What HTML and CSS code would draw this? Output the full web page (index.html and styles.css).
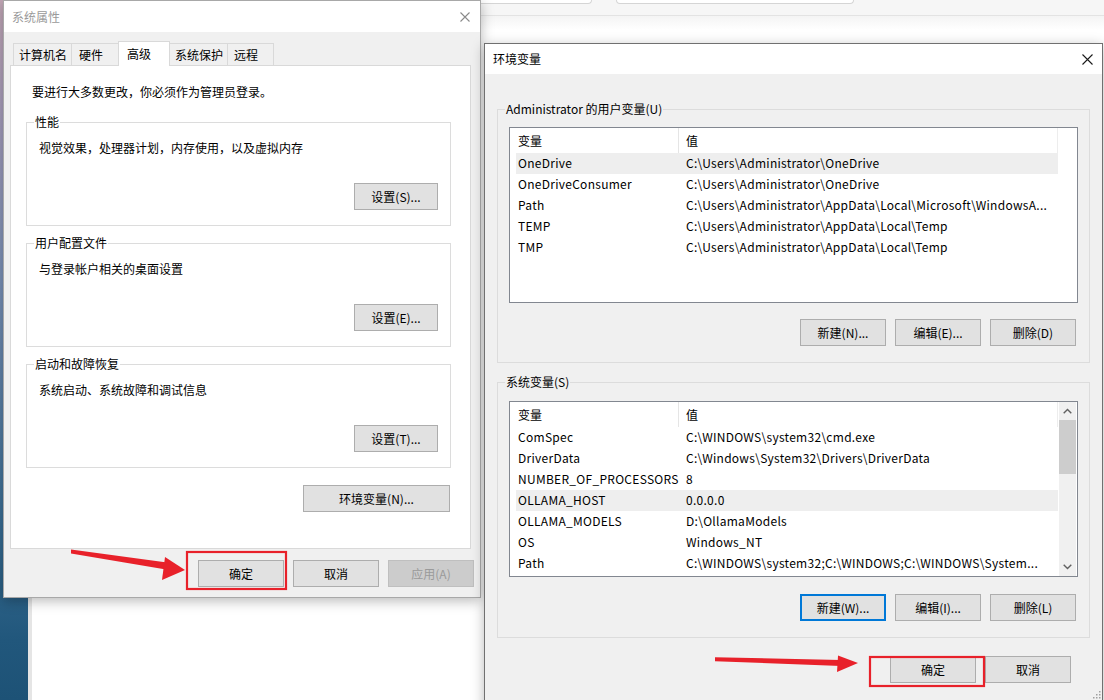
FILE: index.html
```html
<!DOCTYPE html>
<html lang="zh-CN">
<head>
<meta charset="utf-8">
<title>系统属性 - 环境变量</title>
<link rel="stylesheet" href="styles.css">
</head>
<body>
<div class="screen">
  <div class="desktop"></div>
  <div class="browser">
    <div class="tabstrip">
      <div class="btab btab-a"></div>
      <div class="btab btab-b"></div>
    </div>
    <div class="browser-shade"></div>
  </div>

  <section class="dialog sysprops">
    <header class="titlebar">
      <span class="title">系统属性</span>
      <svg class="close" width="10" height="10" viewBox="0 0 10 10"><path d="M0.5 0.5L9.5 9.5M9.5 0.5L0.5 9.5" stroke="#8a8a8a" stroke-width="1.1" fill="none"/></svg>
    </header>
    <div class="body">
      <div class="tabs">
        <div class="tab t1">计算机名</div>
        <div class="tab t2">硬件</div>
        <div class="tab t3 selected">高级</div>
        <div class="tab t4">系统保护</div>
        <div class="tab t5">远程</div>
      </div>
      <div class="panel">
        <p class="intro">要进行大多数更改，你必须作为管理员登录。</p>
        <fieldset class="group">
          <legend>性能</legend>
          <p class="desc">视觉效果，处理器计划，内存使用，以及虚拟内存</p>
          <div class="group-actions"><button class="btn btn-set">设置(S)...</button></div>
        </fieldset>
        <fieldset class="group">
          <legend>用户配置文件</legend>
          <p class="desc">与登录帐户相关的桌面设置</p>
          <div class="group-actions"><button class="btn btn-set">设置(E)...</button></div>
        </fieldset>
        <fieldset class="group">
          <legend>启动和故障恢复</legend>
          <p class="desc">系统启动、系统故障和调试信息</p>
          <div class="group-actions"><button class="btn btn-set">设置(T)...</button></div>
        </fieldset>
        <div class="panel-actions"><button class="btn btn-env">环境变量(N)...</button></div>
      </div>
      <div class="dialog-actions">
        <button class="btn">确定</button>
        <button class="btn">取消</button>
        <button class="btn" disabled>应用(A)</button>
      </div>
    </div>
  </section>

  <section class="dialog envvars">
    <header class="titlebar">
      <span class="title">环境变量</span>
      <svg class="close" width="11" height="11" viewBox="0 0 11 11"><path d="M0.5 0.5L10.5 10.5M10.5 0.5L0.5 10.5" stroke="#1a1a1a" stroke-width="1.1" fill="none"/></svg>
    </header>
    <div class="body">
      <fieldset class="group">
        <legend>Administrator 的用户变量(U)</legend>
        <div class="listview lv-user">
          <div class="lv-rows">
            <div class="lv-head"><span>变量</span><span>值</span></div>
            <div class="lv-row hl"><span>OneDrive</span><span>C:\Users\Administrator\OneDrive</span></div>
            <div class="lv-row"><span>OneDriveConsumer</span><span>C:\Users\Administrator\OneDrive</span></div>
            <div class="lv-row"><span>Path</span><span>C:\Users\Administrator\AppData\Local\Microsoft\WindowsA...</span></div>
            <div class="lv-row"><span>TEMP</span><span>C:\Users\Administrator\AppData\Local\Temp</span></div>
            <div class="lv-row"><span>TMP</span><span>C:\Users\Administrator\AppData\Local\Temp</span></div>
          </div>
          <div class="lv-gutter"></div>
        </div>
        <div class="group-actions list-actions">
          <button class="btn">新建(N)...</button>
          <button class="btn">编辑(E)...</button>
          <button class="btn">删除(D)</button>
        </div>
      </fieldset>
      <fieldset class="group sys">
        <legend>系统变量(S)</legend>
        <div class="listview lv-sys">
          <div class="lv-rows">
            <div class="lv-head"><span>变量</span><span>值</span></div>
            <div class="lv-row"><span>ComSpec</span><span>C:\WINDOWS\system32\cmd.exe</span></div>
            <div class="lv-row"><span>DriverData</span><span>C:\Windows\System32\Drivers\DriverData</span></div>
            <div class="lv-row"><span>NUMBER_OF_PROCESSORS</span><span>8</span></div>
            <div class="lv-row hl"><span>OLLAMA_HOST</span><span>0.0.0.0</span></div>
            <div class="lv-row"><span>OLLAMA_MODELS</span><span>D:\OllamaModels</span></div>
            <div class="lv-row"><span>OS</span><span>Windows_NT</span></div>
            <div class="lv-row"><span>Path</span><span>C:\WINDOWS\system32;C:\WINDOWS;C:\WINDOWS\System...</span></div>
          </div>
          <div class="scrollbar">
            <div class="sb-btn"><svg width="9" height="6" viewBox="0 0 9 6"><path d="M0.7 5.2L4.5 1.4L8.3 5.2" stroke="#606060" stroke-width="1.4" fill="none"/></svg></div>
            <div class="sb-thumb"></div>
            <div class="sb-track"></div>
            <div class="sb-btn"><svg width="9" height="6" viewBox="0 0 9 6"><path d="M0.7 0.8L4.5 4.6L8.3 0.8" stroke="#606060" stroke-width="1.4" fill="none"/></svg></div>
          </div>
        </div>
        <div class="group-actions list-actions sys-actions">
          <button class="btn focused">新建(W)...</button>
          <button class="btn">编辑(I)...</button>
          <button class="btn">删除(L)</button>
        </div>
      </fieldset>
      <div class="dialog-actions">
        <button class="btn">确定</button>
        <button class="btn">取消</button>
      </div>
    </div>
  </section>

  <svg class="annot" width="1104" height="700" viewBox="0 0 1104 700">
    <rect x="187" y="552" width="99" height="37" fill="none" stroke="#e8212a" stroke-width="2.2"/>
    <polygon points="71,549.5 167,562.5 166,569.5 71,553.5" fill="#e8212a"/>
    <polygon points="185,570 165,557 162,580" fill="#e8212a"/>
    <rect x="870" y="657" width="114" height="29" fill="none" stroke="#e8212a" stroke-width="2.2"/>
    <polygon points="715,657.2 841,660 841,666 715,661.2" fill="#e8212a"/>
    <polygon points="858,663 838,655.5 837,672" fill="#e8212a"/>
    <g fill="#a0a0a0">
      <rect x="1099" y="691" width="1.5" height="1.5"/>
      <rect x="1096" y="694" width="1.5" height="1.5"/>
      <rect x="1099" y="694" width="1.5" height="1.5"/>
      <rect x="1093" y="697" width="1.5" height="1.5"/>
      <rect x="1096" y="697" width="1.5" height="1.5"/>
      <rect x="1099" y="697" width="1.5" height="1.5"/>
    </g>
  </svg>
</div>
</body>
</html>
```
FILE: styles.css
```css
* { box-sizing: border-box; }
html, body { margin: 0; padding: 0; }
body {
  width: 1104px;
  height: 700px;
  overflow: hidden;
  background: #fff;
  color: #000;
  font-family: "Noto Sans CJK SC", "Microsoft YaHei", sans-serif;
  font-size: 12px;
  line-height: 16px;
}
.screen { position: relative; width: 1104px; height: 700px; overflow: hidden; }

/* desktop + browser behind the dialogs */
.desktop {
  position: absolute; left: 0; top: 0; width: 28px; height: 700px;
  background: linear-gradient(#c2a7b6 0, #a69cba 110px, #7990b6 280px, #3a6d93 520px, #21577c 640px, #1d5276 700px);
}
.browser {
  position: absolute; left: 28px; top: 0; right: 0; bottom: 0;
  background: #fff;
  border-left: 4px solid #e5e5e5;
}
.tabstrip {
  display: flex; align-items: flex-start;
  height: 16px; background: #f6f6f6; border-bottom: 1px solid #e3e3e3;
}
.btab { height: 4px; background: #fff; border: 1px solid #d5d5d5; border-top: 0; border-radius: 0 0 8px 8px; }
.btab-a { margin-left: 408px; width: 152px; }
.btab-b { margin-left: 24px; width: 238px; }
.browser-shade { height: 14px; background: linear-gradient(#f4f4f4, #fff); }

/* dialogs */
.dialog {
  position: absolute;
  display: flex; flex-direction: column;
  background: #f0f0f0;
  border: 1px solid #a8a8a8;
  box-shadow: 0 3px 12px rgba(0, 0, 0, 0.28);
}
.sysprops { left: 3px; top: 0; width: 478px; height: 598px; }
.envvars { left: 484px; top: 43px; width: 619px; height: 672px; border-color: #707070; }

.titlebar {
  flex: none;
  display: flex; align-items: center; justify-content: space-between;
  background: #fff;
}
.sysprops .titlebar { height: 31px; padding: 0 10px 0 8px; }
.sysprops .title { color: #9a9a9a; }
.envvars .titlebar { height: 30px; padding: 0 9px 0 8px; }
.close { display: block; }

.sysprops .body { padding: 9px 6px 0 6px; }
.envvars .body { padding: 27px 12px 0 12px; }

/* tabs */
.tabs { display: flex; align-items: flex-end; height: 24px; margin-left: 3px; }
.tab {
  height: 22px; line-height: 21px;
  padding-left: 5px;
  border: 1px solid #d9d9d9; border-bottom: 0;
  margin-left: -1px;
  background: #f0f0f0;
  white-space: nowrap;
}
.tab.t1 { margin-left: 0; width: 59px; }
.tab.t2 { width: 48px; padding-left: 7px; }
.tab.t3 { width: 52px; padding-left: 8px; }
.tab.t4 { width: 59px; }
.tab.t5 { width: 47px; padding-left: 6px; }
.tab.selected {
  position: relative; z-index: 1;
  height: 25px; line-height: 23px;
  margin-bottom: -1px;
  background: #fff;
}

.panel {
  height: 484px;
  margin-right: 3px;
  padding: 18px 19px 0 15px;
  background: #fff;
  border: 1px solid #d9d9d9;
}
.intro { margin: 0 0 0 6px; }

/* group boxes */
.group {
  margin: 0; min-width: 0;
  border: 1px solid #dcdcdc;
}
.sysprops .group { padding: 0 12px 15px 0; margin-top: 9px; }
.sysprops .intro + .group { margin-top: 14px; }
.group legend { margin-left: 7px; padding: 0 1px; line-height: 16px; }
.desc { margin: 10px 0 0 12px; }
.group-actions { display: flex; justify-content: flex-end; gap: 9px; }
.sysprops .group-actions { margin-top: 27px; }

.panel-actions { display: flex; justify-content: flex-end; margin-top: 17px; }
.dialog-actions { display: flex; justify-content: flex-end; gap: 9px; }
.sysprops .dialog-actions { margin-top: 11px; }

/* buttons */
.btn {
  height: 27px; width: 86px;
  padding: 0;
  display: flex; align-items: center; justify-content: center;
  font: inherit; color: #000;
  background: #e1e1e1;
  border: 1px solid #adadad;
  border-radius: 0;
  white-space: nowrap;
}
.btn-set { width: 84px; }
.btn-env { width: 147px; margin-right: 1px; }
.btn:disabled { background: #cccccc; border-color: #bfbfbf; color: #9a9a9a; }
.btn.focused { border: 2px solid #0078d7; }

/* env dialog */
.envvars .group { padding: 0 11px 16px 0; }
.envvars .group.sys { margin-top: 11px; }
.listview {
  display: flex;
  height: 176px;
  margin: 10px 0 0 11px;
  background: #fff;
  border: 1px solid #828790;
}
.lv-sys { margin-top: 11px; }
.lv-rows { flex: 1; min-width: 0; margin-left: 6px; }
.lv-gutter, .scrollbar { flex: none; width: 17px; margin: 0 1px; }
.lv-head, .lv-row {
  display: grid; grid-template-columns: 163px 1fr;
  white-space: nowrap;
}
.lv-head { height: 25px; line-height: 25px; border-right: 1px solid #ededed; }
.lv-head span:first-child { border-right: 1px solid #e5e5e5; }
.lv-row { height: 21px; line-height: 20px; letter-spacing: 0.28px; }
.lv-row.hl { background: #eeeeee; }
.lv-head span, .lv-row span { overflow: hidden; padding-left: 2px; }
.lv-head span + span, .lv-row span + span { padding-left: 7px; }

.scrollbar { display: flex; flex-direction: column; background: #f0f0f0; }
.sb-btn { height: 18px; display: flex; align-items: center; justify-content: center; }
.sb-thumb { height: 54px; background: #cdcdcd; }
.sb-track { flex: 1; }

.list-actions { margin-top: 16px; margin-right: 2px; }
.sys-actions { margin-top: 17px; }
.envvars .dialog-actions { margin-top: 18px; margin-right: 19px; }

.annot { position: absolute; left: 0; top: 0; z-index: 5; pointer-events: none; }
```
